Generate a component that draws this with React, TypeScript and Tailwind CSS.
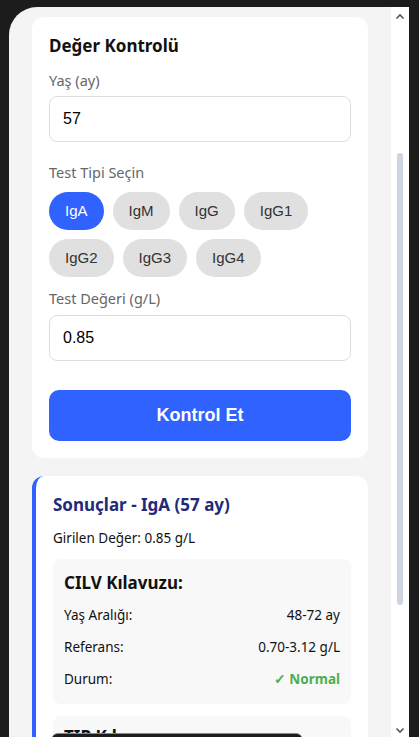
import React, { useState } from 'react';

const tests = ['IgA', 'IgM', 'IgG', 'IgG1', 'IgG2', 'IgG3', 'IgG4'];

const ui = "font-['Noto_Sans','Open_Sans',sans-serif]";
const arial = "font-['Liberation_Sans',Arial,sans-serif]";

export default function App() {
  const [age, setAge] = useState('57');
  const [value, setValue] = useState('0.85');
  const [selected, setSelected] = useState('IgA');

  return (
    <div className={`w-[419px] h-[737px] overflow-hidden bg-[#1c1c1c] pt-[7px] pl-[9px] pr-[10px] relative ${ui}`}>
      <div className="flex h-[760px]">
        {/* phone screen */}
        <div className="w-[382px] bg-[#f4f4f4] rounded-l-[28px] px-[23px] pt-[10px]">
          {/* form card */}
          <div className="bg-white rounded-xl px-[17px] pt-[18px] pb-[17px]">
            <h2 className="text-[17px] leading-[22px] font-bold text-[#111]">Değer Kontrolü</h2>

            <label className="block mt-[13px] text-[14.5px] leading-[20px] text-[#666]">Yaş (ay)</label>
            <input
              value={age}
              onChange={(e) => setAge(e.target.value)}
              className={`mt-[6px] w-full h-[46px] border border-[#ddd] rounded-lg px-[13px] text-[16px] text-black outline-none ${arial}`}
            />

            <label className="block mt-[20px] text-[14.5px] leading-[20px] text-[#666]">Test Tipi Seçin</label>
            <div className="mt-[10px] flex flex-wrap gap-[9px]">
              {tests.map((t) => (
                <button
                  key={t}
                  onClick={() => setSelected(t)}
                  className={`h-[38px] px-[16px] rounded-full text-[15px] ${arial} ${
                    selected === t ? 'bg-[#2f62ff] text-white' : 'bg-[#e0e0e0] text-[#333]'
                  }`}
                >
                  {t}
                </button>
              ))}
            </div>

            <label className="block mt-[11px] text-[14.5px] leading-[20px] text-[#666]">Test Değeri (g/L)</label>
            <input
              value={value}
              onChange={(e) => setValue(e.target.value)}
              className={`mt-[7px] w-full h-[46px] border border-[#ddd] rounded-lg px-[13px] text-[16px] text-black outline-none ${arial}`}
            />

            <button className={`mt-[29px] w-full h-[51px] rounded-[10px] bg-[#2f62ff] text-white text-[18px] font-bold ${arial}`}>
              Kontrol Et
            </button>
          </div>

          {/* results card */}
          <div className="mt-[18px] bg-white rounded-xl border-l-4 border-[#2f62ff] pl-[17px] pr-[17px] pt-[18px]">
            <h3 className="text-[17px] leading-[22px] font-bold text-[#1f2a7a]">Sonuçlar - IgA (57 ay)</h3>
            <p className="mt-[12px] text-[13.5px] leading-[20px] text-[#111]">Girilen Değer: 0.85 g/L</p>

            <div className="mt-[11px] bg-[#f8f8f8] rounded-lg px-[11px] pt-[13px] pb-[15px]">
              <h4 className="text-[17px] leading-[22px] font-bold text-[#111]">CILV Kılavuzu:</h4>
              <div className="mt-[11px] flex flex-col gap-[12px] text-[13.5px] leading-[20px] text-[#111]">
                <div className="flex justify-between">
                  <span>Yaş Aralığı:</span>
                  <span>48-72 ay</span>
                </div>
                <div className="flex justify-between">
                  <span>Referans:</span>
                  <span>0.70-3.12 g/L</span>
                </div>
                <div className="flex justify-between">
                  <span>Durum:</span>
                  <span className="font-bold text-[#4caf50]">✓ Normal</span>
                </div>
              </div>
            </div>

            <div className="mt-[12px] bg-[#f8f8f8] rounded-lg px-[11px] pt-[10px] h-[80px]">
              <h4 className="text-[17px] leading-[22px] font-bold text-[#111]">TIP Kılavuzu:</h4>
            </div>
          </div>
        </div>

        {/* scrollbar */}
        <div className="w-[18px] bg-white relative">
          <svg className="absolute left-[4px] top-[5px]" width="10" height="10" viewBox="0 0 10 10">
            <path d="M1.5 6.5 L5 3 L8.5 6.5" stroke="#555" strokeWidth="1.6" fill="none" />
          </svg>
          <div className="absolute left-[6px] top-[146px] w-[6px] h-[452px] rounded-full bg-[#cdd6e0]" />
          <svg className="absolute left-[4px] top-[718px]" width="10" height="10" viewBox="0 0 10 10">
            <path d="M1.5 3.5 L5 7 L8.5 3.5" stroke="#555" strokeWidth="1.6" fill="none" />
          </svg>
        </div>
      </div>

      {/* bottom overlay bar */}
      <div className="absolute left-[52px] top-[733px] w-[250px] h-[10px] rounded-t-md bg-[#1c1c1c] border-t border-[#888]" />
    </div>
  );
}
